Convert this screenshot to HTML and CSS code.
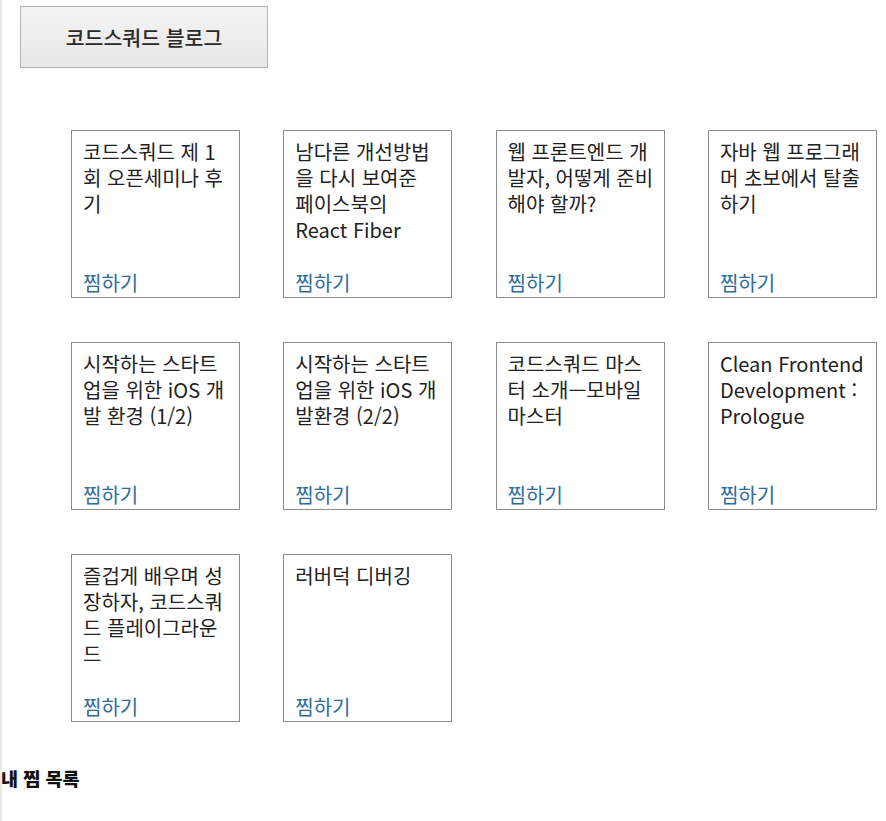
FILE: index.html
```html
<!DOCTYPE html>
<html lang="ko">
<head>
<meta charset="utf-8">
<title>코드스쿼드 블로그</title>
<link rel="stylesheet" href="styles.css">
</head>
<body>
<div class="page">
  <header class="blog-title">코드스쿼드 블로그</header>
  <main class="post-grid">
    <article class="card"><h2 class="card-title">코드스쿼드 제 1 회 오픈세미나 후기</h2><a class="like">찜하기</a></article>
    <article class="card"><h2 class="card-title">남다른 개선방법을 다시 보여준 <span class="word">페이스북의</span> React Fiber</h2><a class="like">찜하기</a></article>
    <article class="card"><h2 class="card-title">웹 프론트엔드 개발자, 어떻게 준비해야 할까?</h2><a class="like">찜하기</a></article>
    <article class="card"><h2 class="card-title">자바 웹 프로그래머 초보에서 탈출하기</h2><a class="like">찜하기</a></article>
    <article class="card"><h2 class="card-title">시작하는 스타트업을 위한 iOS 개발 환경 (1/2)</h2><a class="like">찜하기</a></article>
    <article class="card"><h2 class="card-title">시작하는 스타트업을 위한 iOS 개발환경 (2/2)</h2><a class="like">찜하기</a></article>
    <article class="card"><h2 class="card-title">코드스쿼드 마스터 소개—모바일 마스터</h2><a class="like">찜하기</a></article>
    <article class="card"><h2 class="card-title">Clean Frontend Development : Prologue</h2><a class="like">찜하기</a></article>
    <article class="card"><h2 class="card-title">즐겁게 배우며 성장하자, 코드스쿼드 플레이그라운드</h2><a class="like">찜하기</a></article>
    <article class="card"><h2 class="card-title">러버덕 디버깅</h2><a class="like">찜하기</a></article>
  </main>
  <h3 class="my-likes">내 찜 목록</h3>
</div>
</body>
</html>
```
FILE: styles.css
```css
html, body {
  margin: 0;
  padding: 0;
  background: #ffffff;
}
body {
  font-family: "Noto Sans CJK KR", "Noto Sans", sans-serif;
  color: #222;
  border-left: 2px solid #ecebe2;
  min-height: 821px;
  box-sizing: border-box;
}
.page {
  padding-top: 6px;
}
.blog-title {
  margin-left: 18px;
  width: 248px;
  height: 62px;
  box-sizing: border-box;
  border: 1px solid #b4b4b4;
  background: linear-gradient(#f3f3f3, #e8e8e8);
  display: flex;
  align-items: center;
  justify-content: center;
  font-size: 20.5px;
  font-weight: 500;
  color: #2a2a2a;
}
.post-grid {
  margin: 62px 0 0 69px;
  display: grid;
  grid-template-columns: repeat(4, 169px);
  column-gap: 43.3px;
  row-gap: 44px;
}
.card {
  height: 168px;
  box-sizing: border-box;
  border: 1px solid #8c8c8c;
  padding: 8px 8px 1px 11px;
  display: flex;
  flex-direction: column;
  justify-content: space-between;
}
.card-title {
  margin: 0;
  font-size: 20px;
  font-weight: normal;
  line-height: 26px;
  color: #222;
}
.word {
  display: inline-block;
  line-height: 26px;
}
.like {
  font-size: 20px;
  line-height: 26px;
  color: #2e6c9c;
}
.my-likes {
  margin: 44px 0 0 -1px;
  font-size: 18.5px;
  font-weight: 900;
  color: #111;
  line-height: 24px;
}
```
